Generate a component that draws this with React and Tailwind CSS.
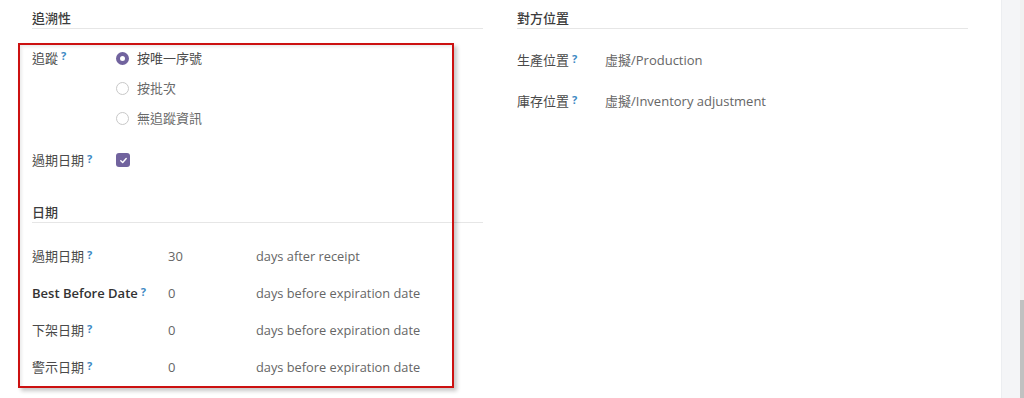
import React from 'react';

const font = { fontFamily: '"Open Sans", "Noto Sans CJK TC", sans-serif' };

const Help = () => (
    <sup className="ml-[3px] text-[11px] font-bold text-[#3d8ac4] relative -top-[2px]">?</sup>
);

const SectionTitle = ({ children }) => (
    <div className="pt-[9px] pb-[1px] border-b border-[#e6e6e6] text-[13px] leading-[18px] font-medium text-[#3c3c3c]">
        {children}
    </div>
);

const Radio = ({ checked, label }) => (
    <div className="h-[30px] flex items-center gap-[8px]">
        {checked ? (
            <span className="w-[13px] h-[13px] rounded-full border-[4px] border-[#71639e] bg-white" />
        ) : (
            <span className="w-[13px] h-[13px] rounded-full border border-[#c8c8c8] bg-white" />
        )}
        <span className={checked ? 'text-[#4a4a4a]' : 'text-[#6a6a6a]'}>{label}</span>
    </div>
);

const DateRow = ({ label, bold, value, unit }) => (
    <div className="h-[37px] flex items-center">
        <div className={'w-[136px] ' + (bold ? 'font-semibold text-[#333]' : 'text-[#4a4a4a]')}>
            {label}
            <Help />
        </div>
        <div className="w-[88px] text-[#666]">{value}</div>
        <div className="text-[#666] text-[12.8px]">{unit}</div>
    </div>
);

const LocRow = ({ label, value }) => (
    <div className="h-[41px] flex items-center">
        <div className="w-[88px] text-[#4a4a4a]">
            {label}
            <Help />
        </div>
        <div className="text-[#666]">{value}</div>
    </div>
);

export default function App() {
    return (
        <div className="relative w-[1024px] h-[398px] flex overflow-hidden bg-white text-[13px] leading-[18px]" style={font}>
            <div className="w-[1001px] flex gap-[34px] pl-8 pr-[33px]">
                {/* left column */}
                <div className="w-[451px]">
                    <SectionTitle>追溯性</SectionTitle>
                    <div className="mt-[14px] flex">
                        <div className="w-[84px] h-[30px] flex items-center text-[#4a4a4a]">
                            追蹤
                            <Help />
                        </div>
                        <div>
                            <Radio checked label="按唯一序號" />
                            <Radio label="按批次" />
                            <Radio label="無追蹤資訊" />
                        </div>
                    </div>
                    <div className="mt-[12px] h-[30px] flex items-center">
                        <div className="w-[84px] text-[#4a4a4a]">
                            過期日期
                            <Help />
                        </div>
                        <span className="w-[14px] h-[14px] rounded-[3px] bg-[#71639e] flex items-center justify-center">
                            <svg width="9" height="9" viewBox="0 0 10 10" fill="none">
                                <path d="M2 5.2 4.1 7.2 8 2.8" stroke="white" strokeWidth="1.6" strokeLinecap="round" strokeLinejoin="round" />
                            </svg>
                        </span>
                    </div>
                    <div className="mt-[28px]">
                        <div className="pb-[1px] border-b border-[#e6e6e6] text-[13px] leading-[18px] font-medium text-[#3c3c3c]">日期</div>
                    </div>
                    <div className="mt-[14px]">
                        <DateRow label="過期日期" value="30" unit="days after receipt" />
                        <DateRow label="Best Before Date" bold value="0" unit="days before expiration date" />
                        <DateRow label="下架日期" value="0" unit="days before expiration date" />
                        <DateRow label="警示日期" value="0" unit="days before expiration date" />
                    </div>
                </div>

                {/* right column */}
                <div className="w-[451px]">
                    <SectionTitle>對方位置</SectionTitle>
                    <div className="mt-[10px]">
                        <LocRow label="生產位置" value="虛擬/Production" />
                        <LocRow label="庫存位置" value="虛擬/Inventory adjustment" />
                    </div>
                </div>
            </div>

            {/* side band + scrollbar */}
            <div className="w-[19px] h-full bg-[#f4f5f7] border-l border-[#eceef1]" />
            <div className="w-[4px] h-full bg-[#f1f1f1] flex flex-col justify-end">
                <div className="h-[98px] bg-[#c1c1c1]" />
            </div>

            {/* red annotation box */}
            <div className="absolute left-[18px] top-[43px] w-[436px] h-[345px] border-2 border-[#cc1111] shadow-[3px_3px_4px_rgba(0,0,0,0.22),inset_2px_2px_3px_rgba(0,0,0,0.08)] pointer-events-none" />
        </div>
    );
}
